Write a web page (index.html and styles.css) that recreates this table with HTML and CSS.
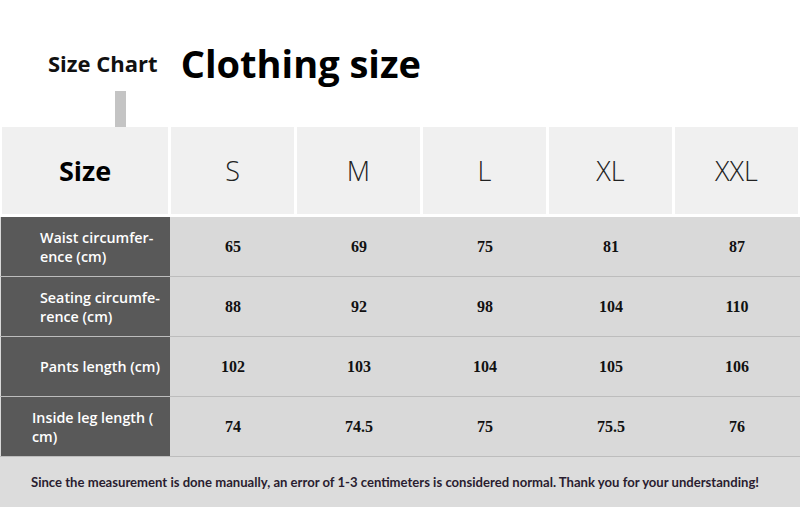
FILE: index.html
```html
<!DOCTYPE html>
<html>
<head>
<meta charset="utf-8">
<link rel="stylesheet" href="styles.css">
</head>
<body>
<div class="page">
  <div class="titles">
    <span class="chart-label">Size Chart</span>
    <h1 class="main-title">Clothing size</h1>
  </div>
  <div class="pointer"></div>
  <div class="head-row">
    <div class="head-cell head-first">Size</div>
    <div class="head-cell">S</div>
    <div class="head-cell">M</div>
    <div class="head-cell">L</div>
    <div class="head-cell">XL</div>
    <div class="head-cell">XXL</div>
  </div>
  <div class="table">
    <div class="row">
      <div class="label">Waist circumfer-<br>ence (cm)</div>
      <div class="val">65</div><div class="val">69</div><div class="val">75</div><div class="val">81</div><div class="val">87</div>
    </div>
    <div class="row">
      <div class="label">Seating circumfe-<br>rence (cm)</div>
      <div class="val">88</div><div class="val">92</div><div class="val">98</div><div class="val">104</div><div class="val">110</div>
    </div>
    <div class="row">
      <div class="label">Pants length (cm)</div>
      <div class="val">102</div><div class="val">103</div><div class="val">104</div><div class="val">105</div><div class="val">106</div>
    </div>
    <div class="row">
      <div class="label label-wide">Inside leg length (<br>cm)</div>
      <div class="val">74</div><div class="val">74.5</div><div class="val">75</div><div class="val">75.5</div><div class="val">76</div>
    </div>
    <div class="note">Since the measurement is done manually, an error of 1-3 centimeters is considered normal. Thank you for your understanding!</div>
  </div>
</div>
</body>
</html>
```

FILE: styles.css
```css
html, body {
  margin: 0;
  padding: 0;
  background: #ffffff;
}
.page {
  width: 800px;
  height: 507px;
  overflow: hidden;
  font-family: "Open Sans", "Liberation Sans", sans-serif;
}
.titles {
  height: 91px;
  box-sizing: border-box;
  padding-top: 44px;
  padding-left: 48px;
  white-space: nowrap;
  line-height: 1;
}
.chart-label {
  display: inline-block;
  font-size: 22px;
  font-weight: 700;
  color: #111;
  letter-spacing: 0;
  vertical-align: 6px;
}
.main-title {
  display: inline-block;
  margin: 0 0 0 19px;
  font-size: 38px;
  font-weight: 700;
  color: #000;
  line-height: 1;
  vertical-align: baseline;
}
.pointer {
  width: 11px;
  height: 36px;
  margin-left: 115px;
  background: #c4c4c4;
}
.head-row {
  display: grid;
  grid-template-columns: 166px repeat(5, 123px);
  column-gap: 3px;
  padding-left: 2px;
  height: 87px;
}
.head-cell {
  background: #f0f0f0;
  display: flex;
  align-items: center;
  justify-content: center;
  font-size: 27px;
  font-weight: 300;
  color: #222;
}
.head-first {
  font-weight: 700;
  color: #000;
  font-size: 27px;
}
.table {
  margin-top: 3px;
}
.row {
  display: grid;
  grid-template-columns: 169px repeat(5, 126px);
  padding-left: 1px;
  height: 60px;
  background: #d9d9d9;
  border-bottom: 1px solid #bdbdbd;
  box-sizing: border-box;
}
.label {
  background: #595959;
  color: #fff;
  font-size: 14.3px;
  font-weight: 600;
  line-height: 19px;
  display: flex;
  align-items: center;
  padding-left: 39px;
}
.label-wide {
  padding-left: 31px;
}
.val {
  display: flex;
  align-items: center;
  justify-content: center;
  font-family: "Liberation Serif", serif;
  font-weight: 700;
  font-size: 16px;
  color: #111;
}
.note {
  height: 50px;
  background: #dcdcdc;
  border-bottom: 1px solid #bdbdbd;
  display: flex;
  align-items: center;
  justify-content: center;
  font-family: "Lato", "Liberation Sans", sans-serif;
  font-weight: 700;
  font-size: 13.1px;
  color: #2a1d30;
  padding-right: 10px;
}
```
